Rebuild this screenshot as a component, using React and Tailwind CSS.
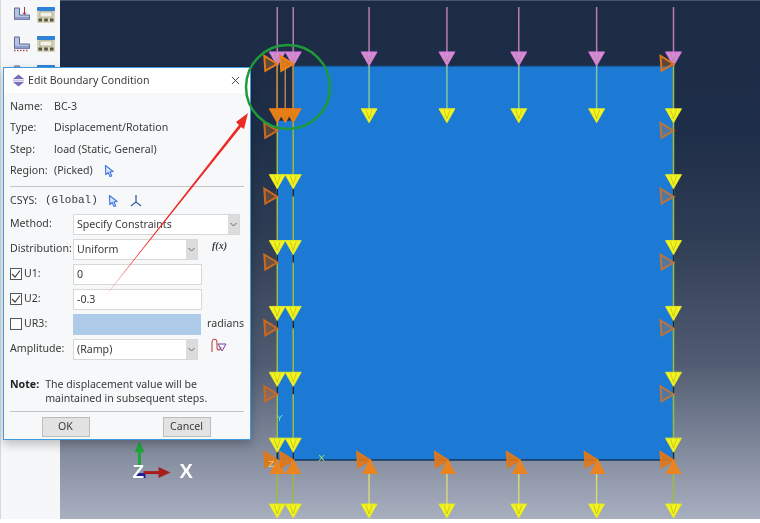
import React from 'react';

const COLS = [369, 447, 519, 597];
const ROWS = [180, 246, 312, 378, 444];
const SIDE_Y = [130, 196, 262, 328, 394];

function Head({ x, y, fill = '#f4f41e', stroke = '#dfe628' }) {
  return (
    <g>
      <polygon points={`${x - 8},${y - 6} ${x + 8},${y - 6} ${x},${y + 8}`} fill={fill} stroke={stroke} strokeWidth="1" />
      <path d={`M${x - 3} ${y - 5} L${x} ${y + 4} L${x + 3} ${y - 5}`} fill="none" stroke="#8d8f1c" strokeWidth="0.7" opacity="0.6" />
    </g>
  );
}

function Tri({ x, y, color = '#c8702c', solid }) {
  return (
    <g>
      <polygon points={`${x - 13},${y - 8} ${x},${y} ${x - 12},${y + 7}`} fill={color} fillOpacity={solid ? 0.9 : 0.35} stroke={color} strokeWidth="2" />
    </g>
  );
}

function Fan({ x, y = 460 }) {
  return (
    <g>
      <Tri x={x} y={y} color="#e0781a" solid />
      <polygon points={`${x - 8},${y + 14} ${x + 8},${y + 14} ${x},${y - 1}`} fill="#ea8420" />
    </g>
  );
}

function Model() {
  return (
    <svg className="absolute inset-0 w-full h-full" viewBox="60 0 700 519" aria-hidden="true">
      <polygon points="293,65 674,65 674,460 277,460 277,120 293,120" fill="#1c7ad4" />
      <path d="M293 65H674M293 460H674" stroke="#14395f" strokeWidth="1.5" />

      {[277, 293, ...COLS, 674].map((x) => (
        <g key={x}>
          <line x1={x} y1="6" x2={x} y2="55" stroke="#b77fb4" strokeWidth="1.5" />
          <line x1={x} y1="62" x2={x} y2="508" stroke={x === 277 || x === 293 || x === 674 ? '#9dbb3f' : 'none'} strokeWidth="1.5" />
        </g>
      ))}
      {COLS.map((x) => (
        <g key={x}>
          <line x1={x} y1="62" x2={x} y2="110" stroke="#7dc5a0" strokeWidth="1.5" />
          <line x1={x} y1="466" x2={x} y2="508" stroke="#d3d87a" strokeWidth="1.5" />
          <Head x={x} y={114} />
          <Fan x={x + 1} />
          <Head x={x} y={510} />
        </g>
      ))}

      {[277, 293, 674].map((x) => (
        <g key={x}>
          {ROWS.map((y) => (
            <g key={y}>
              <line x1={x} y1={y + 8} x2={x} y2={y + 16} stroke="#10264a" strokeWidth="1.5" />
              <Head x={x} y={y} />
            </g>
          ))}
        </g>
      ))}
      <Head x={674} y={114} />

      <line x1="285" y1="62" x2="285" y2="112" stroke="#b5844a" strokeWidth="1.5" />
      <line x1="277" y1="62" x2="277" y2="112" stroke="#c8803c" strokeWidth="1.5" />
      <line x1="293" y1="62" x2="293" y2="112" stroke="#c8803c" strokeWidth="1.5" />
      {[277, 285, 293].map((x) => <Head key={x} x={x} y={114} fill="#ee7f17" stroke="#e87a16" />)}

      {[277, 293, ...COLS, 674].map((x) => <Head key={x} x={x} y={57} fill="#d98ae0" stroke="#cc78cf" />)}

      {SIDE_Y.map((y) => (
        <g key={y}>
          <Tri x={277} y={y} color="#c96a20" />
          <Tri x={674} y={y} color="#b9753c" />
        </g>
      ))}
      <Tri x={277} y={63} color="#e37a18" />
      <Tri x={293} y={63} color="#ec8218" solid />
      <Tri x={674} y={63} color="#d9741c" />
      <Fan x={277} />
      <Fan x={293} />
      <Fan x={674} />
      {[277, 293, 674].map((x) => <Head key={x} x={x} y={510} />)}

      <text x="276" y="421" fontSize="10" fill="#6fe0c0" fontFamily="Liberation Sans, sans-serif">Y</text>
      <text x="318" y="461" fontSize="10" fill="#9fe07a" fontFamily="Liberation Sans, sans-serif">X</text>
      <text x="268" y="467" fontSize="10" fill="#f2d070" fontFamily="Liberation Sans, sans-serif">Z</text>

      <line x1="139" y1="448" x2="139" y2="468" stroke="#1fa83a" strokeWidth="3" />
      <polygon points="134,452 144,452 139,441" fill="#1fa83a" />
      <rect x="135" y="473" width="10" height="5" fill="#1c1c9c" />
      <line x1="143" y1="472.5" x2="160" y2="472.5" stroke="#a81c1c" strokeWidth="3" />
      <polygon points="158,467 158,478 170,472.5" fill="#a81c1c" />
      <text x="132" y="478" fontSize="19" fontWeight="700" fill="#fff" fontFamily="Liberation Sans, sans-serif">Z</text>
      <text x="179" y="478" fontSize="20" fontWeight="700" fill="#fff" fontFamily="Liberation Sans, sans-serif">X</text>
    </svg>
  );
}

function BcIcon({ variant }) {
  return (
    <svg width="18" height="16" viewBox="0 0 18 16" aria-hidden="true">
      <path d="M1.5 1V12.5H16.5V8H6.5V1Z" fill="#b9c3e0" stroke="#5d6b98" strokeWidth="1" />
      <rect x="2" y="10" width="14" height="2.5" fill="#8f9bc8" />
      {variant === 0 ? (
        <path d="M11.5 0V7M10 5.5L11.5 7.5L13 5.5" fill="none" stroke="#a8324a" strokeWidth="1" />
      ) : (
        <path d="M1 14.5H16" stroke="#b04a50" strokeWidth="1.6" strokeDasharray="1.5 1.5" />
      )}
    </svg>
  );
}

function TableIcon() {
  return (
    <svg width="18" height="16" viewBox="0 0 18 16" aria-hidden="true">
      <rect x="0" y="0" width="18" height="16" rx="1" fill="#d6d3b8" />
      <rect x="0" y="0" width="18" height="4" rx="1" fill="#2f82d6" />
      <rect x="3" y="5" width="12" height="5" fill="#f2f1e6" stroke="#8d8a70" strokeWidth="0.6" />
      <path d="M1.5 13H5M7.2 13H10.8M13 13H16.5" stroke="#55533f" strokeWidth="3" />
    </svg>
  );
}

function PickIcon() {
  return (
    <svg width="11" height="14" viewBox="0 0 12 14" aria-hidden="true">
      <path d="M1.5 1L10 7.5L6.5 8L8.5 12.5L6.5 13L4.5 8.5L2 11Z" fill="#dbe7fb" stroke="#3f78e0" strokeWidth="1.2" strokeLinejoin="round" />
    </svg>
  );
}

function Select({ value, wide }) {
  return (
    <div className={`flex h-[21px] items-stretch border border-[#d8d8d8] bg-white ${wide ? 'w-[167px]' : 'w-[125px]'}`}>
      <span className="flex-1 pl-[3px] leading-[19px]">{value}</span>
      <span className="flex w-[11px] items-center justify-center bg-[#dcdcdc]">
        <svg width="7" height="5" viewBox="0 0 7 5" aria-hidden="true"><path d="M0.5 1L3.5 4L6.5 1" fill="none" stroke="#666" /></svg>
      </span>
    </div>
  );
}

function Box({ checked }) {
  return (
    <span className="flex h-[12px] w-[12px] items-center justify-center border border-[#555] bg-white">
      {checked && <svg width="10" height="10" viewBox="0 0 10 10" aria-hidden="true"><path d="M1 5L4 8L9 1.5" fill="none" stroke="#444" strokeWidth="1.2" /></svg>}
    </span>
  );
}

function Info({ label, children }) {
  return (
    <div className="flex h-[21.4px] items-center">
      <span className="w-[44px]">{label}</span>
      <span className="flex items-center gap-[11px]">{children}</span>
    </div>
  );
}

function FieldRow({ label, check, children }) {
  return (
    <div className="flex h-[25px] items-center">
      <div className="flex w-[63px] items-center gap-[2px]">
        {check !== undefined && <Box checked={check} />}
        <span>{label}</span>
      </div>
      {children}
    </div>
  );
}

function Input({ value, disabled }) {
  return (
    <div className={`h-[21px] w-[129px] border pl-[3px] leading-[19px] ${disabled ? 'border-[#aecbe9] bg-[#aecbe9]' : 'border-[#d8d8d8] bg-white'}`}>
      {value}
    </div>
  );
}

function Dialog() {
  return (
    <div className="absolute left-[3px] top-[67px] flex h-[373px] w-[248px] flex-col border border-[#3f9be0] bg-[#f6f8f9] font-['Noto_Sans',sans-serif] text-[10.6px] text-[#3a3a3a] shadow-[0_4px_10px_rgba(0,0,0,0.25)]">
      <div className="flex h-[25px] items-center bg-white pl-[8px] pr-[10px] text-[10.6px]">
        <svg width="13" height="13" viewBox="0 0 14 14" aria-hidden="true">
          <path d="M7 0.5L13 5.5H1Z" fill="#7a6fb8" />
          <rect x="1" y="6" width="12" height="2" fill="#c9c4e0" />
          <path d="M7 13.5L13 8.5H1Z" fill="#7a6fb8" />
        </svg>
        <span className="ml-[3px] flex-1">Edit Boundary Condition</span>
        <svg width="9" height="9" viewBox="0 0 10 10" aria-hidden="true"><path d="M1 1L9 9M9 1L1 9" stroke="#333" strokeWidth="1" /></svg>
      </div>

      <div className="flex flex-1 flex-col px-[6px]">
        <div className="pt-[3px]">
          <Info label="Name:">BC-3</Info>
          <Info label="Type:">Displacement/Rotation</Info>
          <Info label="Step:">load (Static, General)</Info>
          <Info label="Region:">(Picked) <PickIcon /></Info>
        </div>
        <div className="mt-[4px] h-px bg-[#c4c4c4]" />

        <div className="flex h-[25px] items-center pt-[3px]">
          <span className="w-[35px]">CSYS:</span>
          <span className="font-['Liberation_Mono',monospace] text-[11px]">(Global)</span>
          <span className="ml-[10px] flex"><PickIcon /></span>
          <svg className="ml-[11px]" width="12" height="13" viewBox="0 0 12 13" aria-hidden="true"><path d="M6 1V8M6 8L1 12M6 8L11 12" fill="none" stroke="#3a5f9a" strokeWidth="1.3" /></svg>
        </div>

        <FieldRow label="Method:"><Select value="Specify Constraints" wide /></FieldRow>
        <FieldRow label="Distribution:">
          <Select value="Uniform" />
          <span className="ml-[14px] -mt-[7px] font-['Liberation_Serif',serif] italic font-bold text-[10px]">f(x)</span>
        </FieldRow>
        <FieldRow label="U1:" check={true}><Input value="0" /></FieldRow>
        <FieldRow label="U2:" check={true}><Input value="-0.3" /></FieldRow>
        <FieldRow label="UR3:" check={false}>
          <Input disabled />
          <span className="ml-[6px]">radians</span>
        </FieldRow>
        <FieldRow label="Amplitude:">
          <Select value="(Ramp)" />
          <svg className="ml-[13px] -mt-[7px]" width="16" height="15" viewBox="0 0 16 15" aria-hidden="true">
            <path d="M1 14V5C1 0 6 0 6 5V9C6 13 9 13 10 9" fill="none" stroke="#b8483c" strokeWidth="1.1" />
            <path d="M7 6H15L11 13Z" fill="none" stroke="#7a3fb0" strokeWidth="1" />
          </svg>
        </FieldRow>

        <div className="mt-[15px] flex gap-[6px] leading-[14px]">
          <span className="font-bold text-[#222]">Note:</span>
          <span>The displacement value will be<br />maintained in subsequent steps.</span>
        </div>
        <div className="mt-[6px] h-px bg-[#c4c4c4]" />
        <div className="flex justify-center gap-[73px] pr-[2px] pt-[5px]">
          <button className="h-[20px] w-[48px] border border-[#bdbdbd] bg-[#e2e2e2]">OK</button>
          <button className="h-[20px] w-[48px] border border-[#bdbdbd] bg-[#e2e2e2]">Cancel</button>
        </div>
      </div>
    </div>
  );
}

function Annotation() {
  return (
    <svg className="absolute inset-0 h-full w-full" viewBox="0 0 760 523" aria-hidden="true">
      <circle cx="288" cy="87" r="42" fill="none" stroke="#1f9a3a" strokeWidth="2.5" />
      <polygon points="103,299 239,125 236,122 248,113 244,129 241,127" fill="#ee2a24" />
    </svg>
  );
}

export default function App() {
  return (
    <div className="relative flex h-[523px] w-[760px] flex-col overflow-hidden bg-white blur-[0.4px]">
      <div className="flex h-[519px]">
        <div className="flex w-[60px] flex-col gap-[13px] border-l border-[#d8d8d8] bg-[#f6f7f9] pl-[12px] pt-[7px]">
          {[0, 1, 2].map((i) => (
            <div key={i} className="flex gap-[6px]">
              <BcIcon variant={i === 0 ? 0 : 1} />
              <TableIcon />
            </div>
          ))}
        </div>
        <div className="relative flex-1 border-t border-[#4a556a] bg-[linear-gradient(180deg,#1d2b45_0%,#1f2e48_25%,#2e3c54_45%,#515c72_70%,#a8afbf_100%)]">
          <Model />
        </div>
      </div>
      <Dialog />
      <Annotation />
    </div>
  );
}
